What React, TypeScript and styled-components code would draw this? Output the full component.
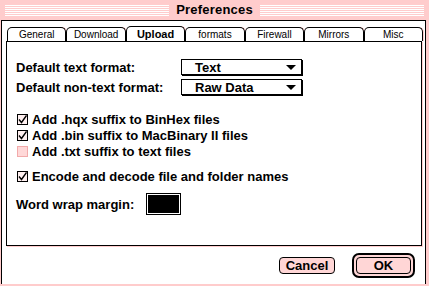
import styled, { createGlobalStyle } from 'styled-components';

const PINK = '#ffcccc';

const GlobalStyle = createGlobalStyle`
  * {
    box-sizing: border-box;
  }
  body {
    margin: 0;
    font-family: "Liberation Sans", Arial, sans-serif;
    color: #000;
  }
`;

const tabs = ['General', 'Download', 'Upload', 'formats', 'Firewall', 'Mirrors', 'Misc'];

const checks = [
  { label: 'Add .hqx suffix to BinHex files', on: true },
  { label: 'Add .bin suffix to MacBinary II files', on: true },
  { label: 'Add .txt suffix to text files', on: false },
];

const Frame = styled.div`
  width: 429px;
  height: 286px;
  background: ${PINK};
  display: flex;
  flex-direction: column;
  overflow: hidden;
`;

const TitleBar = styled.div`
  height: 20px;
  flex-shrink: 0;
  display: flex;
  align-items: flex-start;
  gap: 7px;
  padding: 0 5px;
`;

const Stripes = styled.div`
  flex: 1;
  height: 11px;
  margin-top: 5px;
  background: repeating-linear-gradient(to bottom, #fff 0 1px, transparent 1px 2px);
`;

const Title = styled.div`
  font-size: 13px;
  font-weight: 700;
  line-height: 20px;
  letter-spacing: 0.2px;
`;

const Body = styled.div`
  flex: 1;
  margin: 0 3px 2px 1px;
  background: #fff;
  border: 1px solid #000;
  border-bottom: none;
  padding: 5px 2px 0 4px;
  display: flex;
  flex-direction: column;
`;

const TabRow = styled.div`
  display: flex;
  height: 15px;
  padding-left: 1px;
`;

const Tab = styled.div<{ $active?: boolean }>`
  flex: 1;
  margin-top: ${(p) => (p.$active ? '0' : '1px')};
  border: 1px solid #000;
  border-bottom: none;
  border-radius: 5px 5px 0 0;
  box-shadow: 1px 0 0 ${PINK};
  font-size: ${(p) => (p.$active ? '11px' : '10px')};
  font-weight: ${(p) => (p.$active ? 700 : 400)};
  display: flex;
  align-items: center;
  justify-content: center;
  background: #fff;
`;

const Panel = styled.div`
  height: 205px;
  margin-right: 1px;
  border: 1px solid #000;
  box-shadow: 1px 1px 0 ${PINK};
  padding: 15px 0 0 9px;
  display: flex;
  flex-direction: column;
`;

const FormRow = styled.div`
  display: flex;
  align-items: center;
  height: 20px;
`;

const Label = styled.span<{ $w?: number }>`
  font-size: 13px;
  font-weight: 700;
  width: ${(p) => (p.$w ? `${p.$w}px` : 'auto')};
  white-space: nowrap;
`;

const Popup = styled.div`
  width: 121px;
  height: 16px;
  border: 1px solid #000;
  box-shadow: 1px 1px 0 #000;
  display: flex;
  align-items: center;
  justify-content: space-between;
  padding: 0 5px 0 13px;
  font-size: 13px;
  font-weight: 700;
`;

const Arrow = styled.span`
  width: 0;
  height: 0;
  border-left: 5px solid transparent;
  border-right: 5px solid transparent;
  border-top: 5px solid #000;
`;

const CheckList = styled.div`
  display: flex;
  flex-direction: column;
  margin-top: 14px;
`;

const CheckRow = styled.div<{ $gap?: number }>`
  display: flex;
  align-items: center;
  gap: 4px;
  height: 16px;
  margin-top: ${(p) => p.$gap ?? 0}px;
  padding-left: 1px;
`;

const Box = styled.span<{ $on: boolean }>`
  width: 11px;
  height: 11px;
  border: 1px solid ${(p) => (p.$on ? '#000' : '#f2aaaa')};
  background: ${(p) => (p.$on ? '#fff0f0' : '#ffd8d8')};
  display: flex;
  align-items: center;
  justify-content: center;
`;

const WrapRow = styled.div`
  display: flex;
  align-items: center;
  gap: 12px;
  margin-top: 8px;
  height: 24px;
`;

const WrapBox = styled.div`
  width: 35px;
  height: 22px;
  border: 1px solid #000;
  padding: 1px;
  background: #fff;
  & > div {
    width: 100%;
    height: 100%;
    background: #000;
  }
`;

const ButtonRow = styled.div`
  display: flex;
  justify-content: flex-end;
  align-items: center;
  gap: 17px;
  margin-top: 7px;
  padding-right: 8px;
`;

const Button = styled.div<{ $w: number }>`
  width: ${(p) => p.$w}px;
  height: 17px;
  border: 1px solid #000;
  border-radius: 4px;
  background: #ffd6d6;
  font-size: 13px;
  font-weight: 700;
  display: flex;
  align-items: center;
  justify-content: center;
`;

const DefaultRing = styled.div`
  border: 2px solid #000;
  border-radius: 7px;
  padding: 2px;
  background: #ffd6d6;
`;

const CheckMark = () => (
  <svg width="9" height="9" viewBox="0 0 9 9">
    <path d="M1 4.5 L3.5 7.5 L8.5 0.5" fill="none" stroke="#000" strokeWidth="1.4" />
  </svg>
);

export default function App() {
  return (
    <Frame>
      <GlobalStyle />
      <TitleBar>
        <Stripes />
        <Title>Preferences</Title>
        <Stripes />
      </TitleBar>
      <Body>
        <TabRow>
          {tabs.map((t) => (
            <Tab key={t} $active={t === 'Upload'}>
              {t}
            </Tab>
          ))}
        </TabRow>
        <Panel>
          <FormRow>
            <Label $w={165}>Default text format:</Label>
            <Popup>
              Text
              <Arrow />
            </Popup>
          </FormRow>
          <FormRow>
            <Label $w={165}>Default non-text format:</Label>
            <Popup>
              Raw Data
              <Arrow />
            </Popup>
          </FormRow>
          <CheckList>
            {checks.map((c) => (
              <CheckRow key={c.label}>
                <Box $on={c.on}>{c.on && <CheckMark />}</Box>
                <Label>{c.label}</Label>
              </CheckRow>
            ))}
            <CheckRow $gap={9}>
              <Box $on>
                <CheckMark />
              </Box>
              <Label>Encode and decode file and folder names</Label>
            </CheckRow>
          </CheckList>
          <WrapRow>
            <Label>Word wrap margin:</Label>
            <WrapBox>
              <div />
            </WrapBox>
          </WrapRow>
        </Panel>
        <ButtonRow>
          <Button $w={56}>Cancel</Button>
          <DefaultRing>
            <Button $w={55}>OK</Button>
          </DefaultRing>
        </ButtonRow>
      </Body>
    </Frame>
  );
}
